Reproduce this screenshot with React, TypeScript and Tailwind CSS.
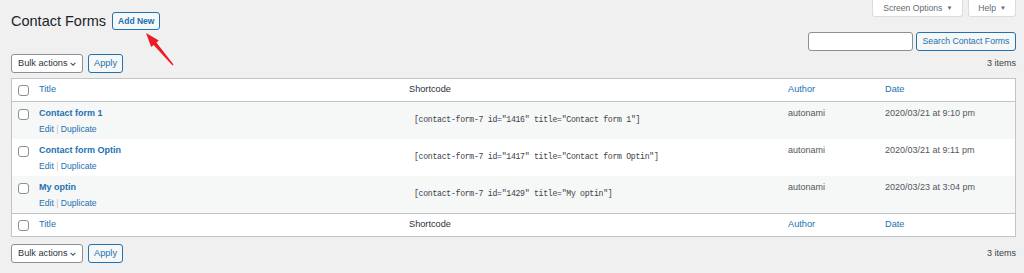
import { type FC } from "react";

const forms = [
  { title: "Contact form 1", id: "1416", date: "2020/03/21 at 9:10 pm" },
  { title: "Contact form Optin", id: "1417", date: "2020/03/21 at 9:11 pm" },
  { title: "My optin", id: "1429", date: "2020/03/23 at 3:04 pm" },
];

const Checkbox: FC = () => (
  <div className="w-[11px] h-[11px] rounded-[3px] border border-[#8c8f94] bg-white" />
);

const BulkActions: FC = () => (
  <div className="flex items-center gap-[5px]">
    <div className="flex items-center justify-between w-[72px] h-[19px] pl-[6px] pr-[5px] bg-white border border-[#8c8f94] rounded-[3px] text-[9.2px] text-[#2c3338]">
      <span>Bulk actions</span>
      <svg width="8" height="8" viewBox="0 0 10 10" fill="none" stroke="#50575e" strokeWidth="1.3">
        <path d="M2 3.5l3 3 3-3" />
      </svg>
    </div>
    <button className="h-[19px] w-[35px] bg-[#f6f7f7] border border-[#2271b1] rounded-[3px] text-[9.2px] text-[#2271b1]">
      Apply
    </button>
  </div>
);

const HeaderRow: FC<{ top?: boolean }> = ({ top }) => (
  <div
    className={`flex items-center h-[23px] bg-white text-[9.2px] ${
      top ? "border-b border-[#c3c4c7]" : "border-t border-[#c3c4c7]"
    }`}
  >
    <div className="w-[27px] pl-[6px]">
      <Checkbox />
    </div>
    <div className="w-[370px] text-[#2271b1]">Title</div>
    <div className="w-[379px] text-[#2c3338]">Shortcode</div>
    <div className="w-[97px] text-[#2271b1]">Author</div>
    <div className="flex-1 text-[#2271b1]">Date</div>
  </div>
);

export default function App() {
  return (
    <div
      className="relative w-[1024px] h-[273px] bg-[#f0f0f1] pl-[11px] pr-[8px] overflow-hidden"
      style={{ fontFamily: '"Liberation Sans", Arial, sans-serif' }}
    >
      {/* top line: title + screen meta tabs */}
      <div className="flex justify-between items-start">
        <div className="flex items-center gap-[6px] mt-[12px]">
          <h1 className="text-[14.5px] leading-[18px] text-[#1d2327]">Contact Forms</h1>
          <button className="h-[18px] px-[5px] bg-[#f6f7f7] border border-[#2271b1] rounded-[3px] text-[8.5px] font-semibold text-[#2271b1]">
            Add New
          </button>
        </div>
        <div className="flex gap-[5px]">
          <div className="flex items-center gap-[4px] h-[17px] px-[10px] bg-white border border-t-0 border-[#dcdcde] rounded-b-[3px] text-[8.6px] text-[#646970]">
            Screen Options <span className="text-[6px]">▼</span>
          </div>
          <div className="flex items-center gap-[4px] h-[17px] px-[9px] bg-white border border-t-0 border-[#dcdcde] rounded-b-[3px] text-[8.6px] text-[#646970]">
            Help <span className="text-[6px]">▼</span>
          </div>
        </div>
      </div>

      {/* search */}
      <div className="flex justify-end gap-[3px] mt-[2px]">
        <div className="w-[105px] h-[19px] bg-white border border-[#8c8f94] rounded-[3px]" />
        <button className="h-[19px] w-[100px] bg-[#f6f7f7] border border-[#2271b1] rounded-[3px] text-[8.7px] text-[#2271b1]">
          Search Contact Forms
        </button>
      </div>

      {/* top tablenav */}
      <div className="flex justify-between items-center mt-[3px]">
        <BulkActions />
        <span className="text-[9px] text-[#3c434a]">3 items</span>
      </div>

      {/* table */}
      <div className="mt-[5px] border border-[#c3c4c7] bg-white">
        <HeaderRow top />
        {forms.map((f, i) => (
          <div
            key={f.id}
            className={`flex items-start h-[37px] text-[9px] ${i % 2 === 0 ? "bg-[#f6f7f7]" : "bg-white"}`}
          >
            <div className="w-[27px] pl-[6px] pt-[7px]">
              <Checkbox />
            </div>
            <div className="w-[370px] pt-[5px]">
              <div className="text-[9px] leading-[13px] font-bold text-[#2271b1]">{f.title}</div>
              <div className="mt-[3px] text-[8.6px] leading-[12px] text-[#2271b1]">
                Edit <span className="text-[#c3c4c7]">|</span> Duplicate
              </div>
            </div>
            <div
              className="w-[379px] pt-[11px] pl-[5px] text-[8.2px] leading-[13px] tracking-[-0.3px] text-[#3c434a] whitespace-nowrap"
              style={{ fontFamily: '"Liberation Mono", monospace' }}
            >
              [contact-form-7 id="{f.id}" title="{f.title}"]
            </div>
            <div className="w-[97px] pt-[5px] leading-[13px] text-[#50575e]">autonami</div>
            <div className="flex-1 pt-[5px] leading-[13px] text-[#50575e]">{f.date}</div>
          </div>
        ))}
        <HeaderRow />
      </div>

      {/* bottom tablenav */}
      <div className="flex justify-between items-center mt-[7px]">
        <BulkActions />
        <span className="text-[9px] text-[#3c434a]">3 items</span>
      </div>

      {/* red pointer arrow */}
      <svg className="absolute left-[140px] top-[28px]" width="40" height="42" viewBox="0 0 40 42">
        <polygon
          points="6,5 18.8,12.5 16.4,14.5 33.5,36.6 32.5,37.4 13.6,16.9 11.2,18.9"
          fill="#ec1c24"
        />
      </svg>
    </div>
  );
}
